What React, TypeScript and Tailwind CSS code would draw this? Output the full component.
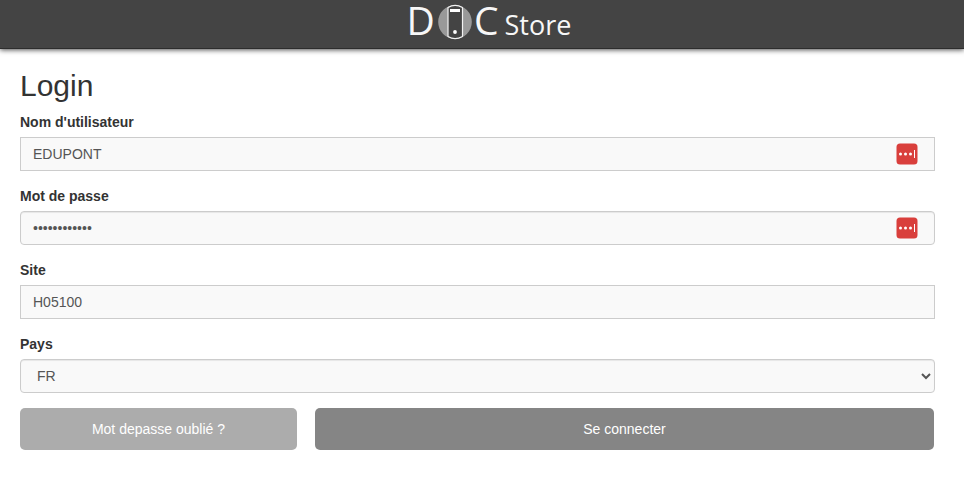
import React, { useState } from 'react'
import clsx from 'clsx'

interface FieldProps {
  id: string
  label: string
  children: React.ReactNode
}

const controlClass =
  'block w-full h-[34px] px-3 py-1 border border-[#ccc] bg-[#f9f9f9] text-sm text-[#555] outline-none focus:border-[#888]'

function Field({ id, label, children }: FieldProps) {
  return (
    <div className="mb-[15px]">
      <label htmlFor={id} className="block mb-[5px] text-sm leading-5 font-bold">
        {label}
      </label>
      <div className="relative">{children}</div>
    </div>
  )
}

// Password manager badge shown inside the text box
function AutofillBadge() {
  return (
    <button
      type="button"
      aria-label="Remplir automatiquement"
      className="absolute right-[17px] inset-y-0 my-auto h-[22px] w-[22px]"
    >
      <svg width="22" height="22" viewBox="0 0 22 22">
        <rect x="0.5" y="0.5" width="21" height="21" rx="3.5" fill="#d93f3c" />
        <circle cx="4.5" cy="11" r="1.5" fill="#fff" />
        <circle cx="9.5" cy="11" r="1.5" fill="#fff" />
        <circle cx="14.5" cy="11" r="1.5" fill="#fff" />
        <rect x="18" y="7" width="1" height="8" fill="#fff" />
      </svg>
    </button>
  )
}

function Logo() {
  return (
    <div className="flex items-baseline font-['Open_Sans','Noto_Sans',sans-serif] font-medium text-[#f7f7f7] leading-[54px]">
      <span className="text-[39px]">D</span>
      <svg width="34" height="36" viewBox="0 0 34 36" className="ml-[3px] self-center">
        <circle cx="17" cy="18" r="16.8" fill="#999" />
        <path
          d="M10 3.5Q17 -0.9 24.5 3.5V32.5Q17 36.9 10 32.5Z"
          fill="#444"
          stroke="#f2f2f2"
          strokeWidth="1.2"
        />
        <rect x="12" y="5" width="10" height="3" fill="#fff" />
        <circle cx="17" cy="28" r="1.9" fill="#fff" />
      </svg>
      <span className="ml-[2px] text-[39px]">C</span>
      <span className="ml-[6px] text-[27px]">Store</span>
    </div>
  )
}

export default function App() {
  const [user, setUser] = useState('EDUPONT')
  const [password, setPassword] = useState('motdepasse12')
  const [site, setSite] = useState('H05100')
  const [country, setCountry] = useState('FR')

  return (
    <div className="font-['Liberation_Sans',Arial,sans-serif] text-sm text-[#333]">
      <header className="flex h-[49px] items-center justify-center border-b border-[#2d2d2d] bg-[#444] pb-1 pl-[14px] shadow-[0_1px_5px_rgba(0,0,0,0.7)]">
        <Logo />
      </header>

      <main className="pt-5 pl-5 pr-[29px]">
        <h1 className="mb-[10px] text-[30px] leading-[33px]">Login</h1>

        <form onSubmit={(e) => e.preventDefault()}>
          <Field id="user" label="Nom d'utilisateur">
            <input
              id="user"
              type="text"
              value={user}
              onChange={(e) => setUser(e.target.value)}
              className={controlClass}
            />
            <AutofillBadge />
          </Field>

          <Field id="password" label="Mot de passe">
            <input
              id="password"
              type="password"
              value={password}
              onChange={(e) => setPassword(e.target.value)}
              className={clsx(controlClass, 'rounded shadow-[inset_0_1px_1px_rgba(0,0,0,0.075)]')}
            />
            <AutofillBadge />
          </Field>

          <Field id="site" label="Site">
            <input
              id="site"
              type="text"
              value={site}
              onChange={(e) => setSite(e.target.value)}
              className={controlClass}
            />
          </Field>

          <Field id="country" label="Pays">
            <select
              id="country"
              value={country}
              onChange={(e) => setCountry(e.target.value)}
              className={clsx(controlClass, 'rounded pr-0 shadow-[inset_0_1px_1px_rgba(0,0,0,0.075)]')}
            >
              <option value="FR">FR</option>
            </select>
          </Field>

          <div className="mr-px flex gap-[18px] text-white">
            <button type="button" className="h-[42px] w-[30.3%] rounded-[5px] bg-[#acacac]">
              Mot depasse oublié ?
            </button>
            <button type="submit" className="h-[42px] flex-1 rounded-[5px] bg-[#858585]">
              Se connecter
            </button>
          </div>
        </form>
      </main>
    </div>
  )
}
